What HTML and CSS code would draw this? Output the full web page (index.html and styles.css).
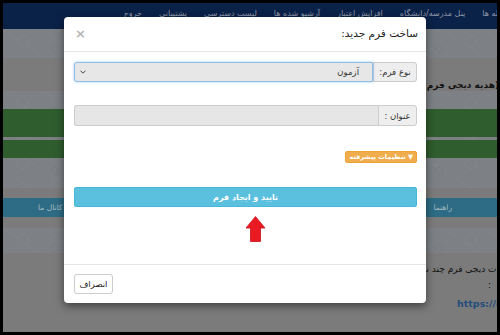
FILE: index.html
```html
<!DOCTYPE html>
<html lang="fa" dir="rtl">
<head>
<meta charset="utf-8">
<title>ساخت فرم جدید</title>
<link rel="stylesheet" href="styles.css">
</head>
<body>
<div class="frame">
  <div class="page">
    <nav class="topnav">
      <ul class="menu">
        <li>مقاله ها</li>
        <li>پنل مدرسه/دانشگاه</li>
        <li>افزایش اعتبار</li>
        <li>آرشیو شده ها</li>
        <li>لیست دسترسی</li>
        <li>پشتیبانی</li>
        <li>خروج</li>
      </ul>
    </nav>
    <div class="pattern banner"></div>
    <div class="intro">
      <p class="gift">(هدیه دیجی فرم) ساخت فرم آنلاین رایگان</p>
    </div>
    <section class="pattern card">
      <div class="green"></div>
      <div class="green thin"></div>
    </section>
    <div class="tabs">
      <span class="tab">راهنما</span>
      <span class="tab">کانال ما</span>
    </div>
    <div class="pattern strip"></div>
    <div class="article">
      <p class="line">ات دیجی فرم چند نمونه سوال</p>
      <p class="colon">:</p>
      <p class="link">https://digiform.ir/</p>
    </div>
  </div>

  <div class="modal">
    <div class="modal-header">
      <h4 class="modal-title">ساخت فرم جدید:</h4>
      <span class="close">×</span>
    </div>
    <div class="modal-body">
      <div class="input-group first">
        <span class="addon">نوع فرم:</span>
        <div class="select">
          <span>آزمون</span>
          <svg class="chev" width="6" height="4" viewBox="0 0 6 4"><path d="M0.5 0.7 L3 3.2 L5.5 0.7" fill="none" stroke="#444" stroke-width="1"/></svg>
        </div>
      </div>
      <div class="input-group second">
        <span class="addon">عنوان :</span>
        <div class="field"></div>
      </div>
      <div class="adv-row">
        <span class="btn-adv">▼ تنظیمات پیشرفته</span>
      </div>
      <div class="btn-submit">تایید و ایجاد فرم</div>
      <div class="arrow-wrap">
        <svg width="21" height="26" viewBox="0 0 21 26">
          <polygon points="10.5,0.5 20,12 15.5,12 15.5,25.5 5.5,25.5 5.5,12 1,12" fill="#ea1a22" stroke="#c8121a" stroke-width="0.8" stroke-linejoin="round"/>
        </svg>
      </div>
    </div>
    <div class="modal-footer">
      <span class="btn-cancel">انصراف</span>
    </div>
  </div>
</div>
</body>
</html>
```

FILE: styles.css
```css
* { box-sizing: border-box; }
html, body { margin: 0; padding: 0; }
body {
  background: #000;
  font-family: "DejaVu Sans", "Noto Sans", sans-serif;
}
.frame {
  position: relative;
  width: 500px;
  height: 335px;
  padding: 3px 3px 3px 3px;
  overflow: hidden;
}
.page {
  width: 494px;
  height: 329px;
  overflow: hidden;
  background: #7b7b7b;
  display: flex;
  flex-direction: column;
}
.topnav {
  height: 26px;
  flex: none;
  background: #0a2148;
  overflow: hidden;
}
.menu {
  list-style: none;
  margin: 0 -12px 0 0;
  padding: 6px 0 0 0;
  display: flex;
  gap: 17px;
  white-space: nowrap;
  font-size: 8px;
  color: #8d96a8;
}
.pattern {
  background-color: #7d8084;
  background-image:
    radial-gradient(circle at 20px 12px, transparent 5px, rgba(140,145,152,0.35) 5.5px, transparent 6.5px),
    radial-gradient(circle at 52px 20px, transparent 3px, rgba(105,108,113,0.3) 3.5px, transparent 4.5px),
    linear-gradient(35deg, transparent 46%, rgba(140,145,152,0.25) 48%, transparent 50%);
  background-size: 64px 30px, 64px 30px, 40px 26px;
}
.banner { height: 29px; flex: none; }
.intro {
  height: 33px;
  flex: none;
  display: flex;
  align-items: flex-end;
}
.gift {
  margin: 0 -2px 1px 0;
  font-size: 9px;
  font-weight: bold;
  color: #121212;
  white-space: nowrap;
}
.card {
  height: 97px;
  flex: none;
  padding-top: 18px;
}
.green {
  height: 28px;
  background: #2f5d2e;
}
.green.thin {
  height: 18px;
  margin-top: 3px;
}
.tabs {
  height: 19px;
  flex: none;
  margin-top: 10px;
  background: #2d6c84;
  display: flex;
  justify-content: space-between;
  align-items: center;
  padding: 0 45px 0 35px;
  font-size: 7.5px;
  color: #a7bac2;
}
.strip { height: 25px; flex: none; margin-top: 11px; }
.article {
  padding-top: 11px;
}
.article p { margin: 0; white-space: nowrap; }
.line {
  font-size: 9px;
  color: #101010;
  height: 12px;
  margin-right: -2px !important;
}
.colon {
  font-size: 9px;
  color: #101010;
  height: 22px;
  padding: 4px 6px 0 0;
}
.link {
  direction: ltr;
  text-align: left;
  padding-left: 454px;
  font-size: 9.5px;
  font-weight: bold;
  color: #234d7a;
}

.modal {
  position: absolute;
  left: 64px;
  top: 17px;
  width: 362px;
  height: 286px;
  background: #fff;
  border-radius: 4px;
  box-shadow: 0 3px 9px rgba(0,0,0,0.5);
  display: flex;
  flex-direction: column;
}
.modal-header {
  height: 35px;
  border-bottom: 1px solid #e5e5e5;
  display: flex;
  align-items: center;
  justify-content: space-between;
  padding: 0 8px 2px 11px;
}
.modal-title {
  margin: 0;
  font-size: 10.5px;
  font-weight: normal;
  color: #222;
}
.close {
  font-size: 13px;
  font-weight: bold;
  color: #b5b5b5;
  line-height: 1;
}
.modal-body {
  padding: 10px 9px 0 10px;
  height: 212px;
}
.input-group {
  display: flex;
  font-size: 8.5px;
  color: #333;
}
.input-group.first { height: 20px; margin-bottom: 23px; }
.input-group.second { height: 21px; margin-bottom: 25px; }
.addon {
  flex: none;
  background: #eee;
  border: 1px solid #ccc;
  border-radius: 0 3px 3px 0;
  display: flex;
  align-items: center;
  justify-content: center;
}
.first .addon { width: 44px; }
.second .addon { width: 39px; }
.select {
  flex: 1;
  background: #e7e7e7;
  border: 1px solid #8fbde6;
  border-radius: 3px 0 0 3px;
  box-shadow: 0 0 3px rgba(102,175,233,0.6);
  display: flex;
  align-items: center;
  justify-content: space-between;
  padding: 0 13px 0 5px;
}
.field {
  flex: 1;
  background: #e6e6e6;
  border: 1px solid #ccc;
  border-right: none;
  border-radius: 3px 0 0 3px;
}
.adv-row {
  display: flex;
  height: 12px;
  margin-bottom: 24px;
}
.btn-adv {
  min-width: 64px;
  height: 12px;
  padding: 0 3px;
  background: #f0ad4e;
  border: 1px solid #eea236;
  border-radius: 2px;
  color: #fff;
  font-size: 6.5px;
  font-weight: bold;
  display: flex;
  align-items: center;
  justify-content: center;
  white-space: nowrap;
}
.btn-submit {
  height: 20px;
  background: #5bc0de;
  border: 1px solid #46b8da;
  border-radius: 2px;
  color: #fff;
  font-size: 8px;
  font-weight: bold;
  display: flex;
  align-items: center;
  justify-content: center;
  margin-bottom: 9px;
}
.arrow-wrap {
  direction: ltr;
  padding-left: 171px;
  height: 26px;
}
.arrow-wrap svg { display: block; }
.modal-footer {
  border-top: 1px solid #e5e5e5;
  padding: 9px 10px;
  display: flex;
  justify-content: flex-end;
}
.btn-cancel {
  width: 39px;
  height: 20px;
  border: 1px solid #ccc;
  border-radius: 3px;
  background: #fff;
  color: #222;
  font-size: 8.5px;
  display: flex;
  align-items: center;
  justify-content: center;
}
```
